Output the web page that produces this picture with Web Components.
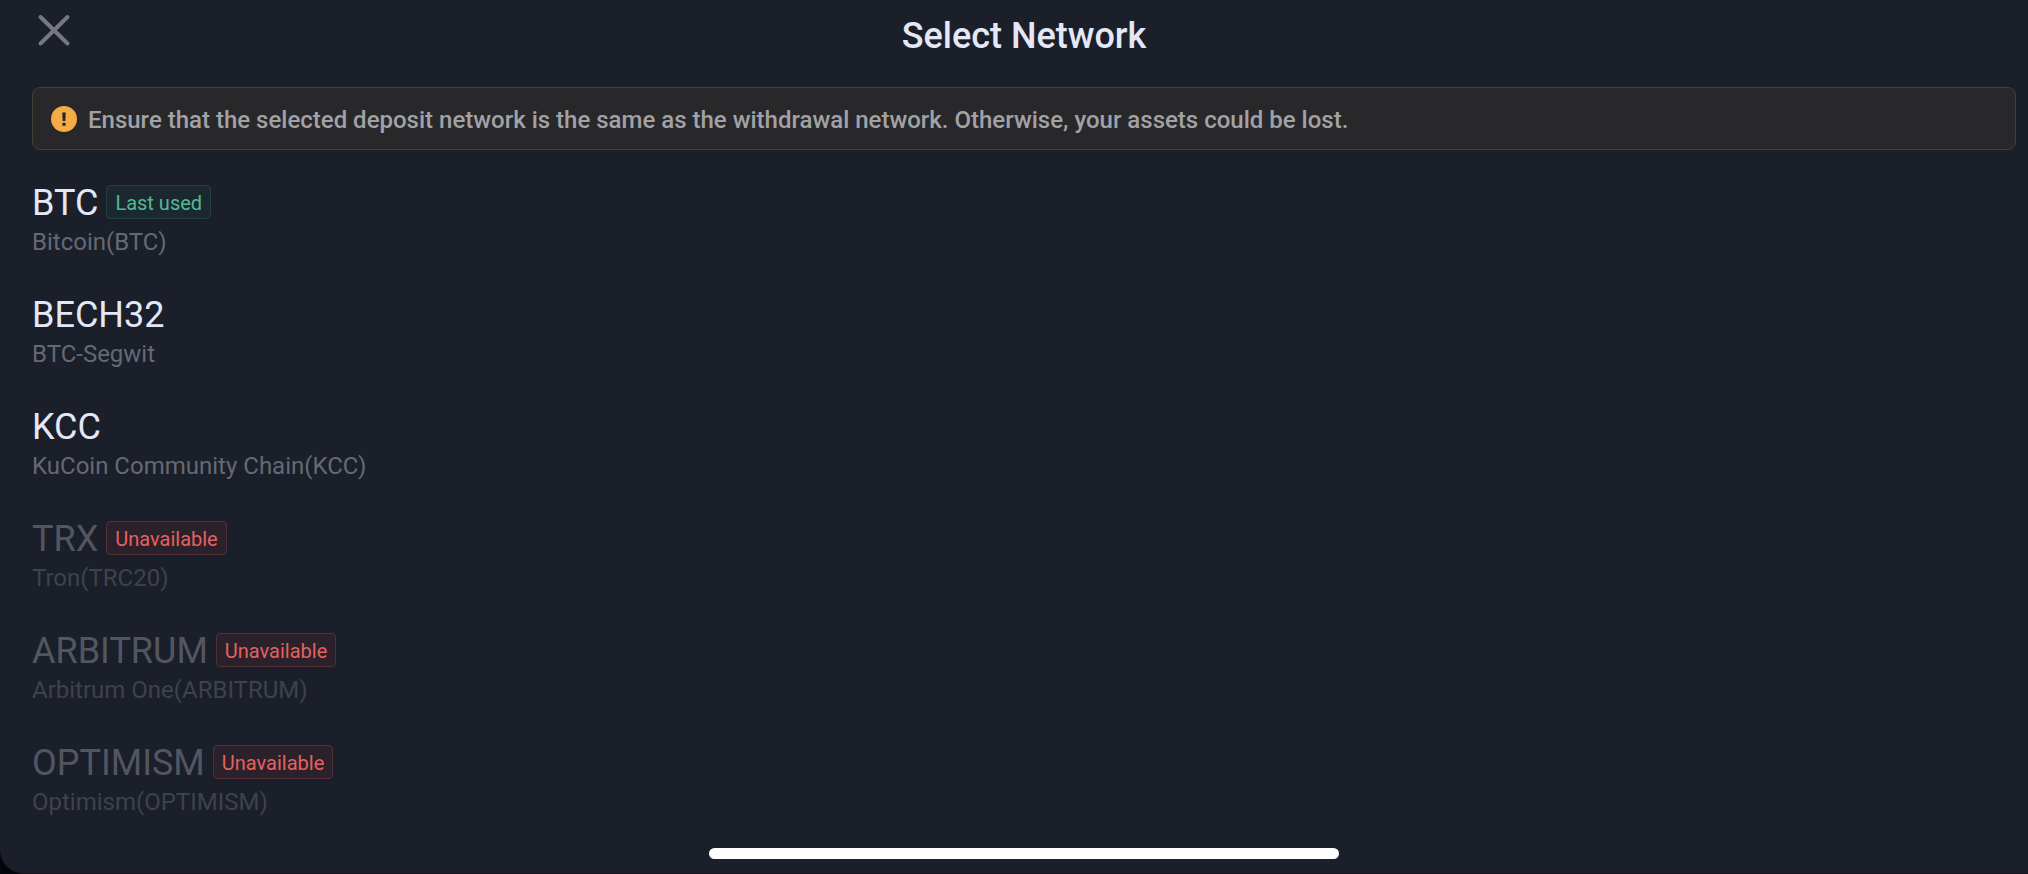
<!DOCTYPE html>
<html lang="en">
<head>
<meta charset="utf-8">
<meta name="viewport" content="width=device-width, initial-scale=1">
<title>Select Network</title>
<style>
html { background: #05060c; }
body { margin: 0; font-family: Roboto, "Liberation Sans", sans-serif; color: #e3e7f6; }
</style>
</head>
<body>
<network-sheet>
  <sheet-header slot="header">Select Network</sheet-header>
  <notice-banner slot="notice">Ensure that the selected deposit network is the same as the withdrawal network. Otherwise, your assets could be lost.</notice-banner>
  <network-item name="BTC">Bitcoin(BTC)<status-tag slot="tag" tone="success">Last used</status-tag></network-item>
  <network-item name="BECH32">BTC-Segwit</network-item>
  <network-item name="KCC">KuCoin Community Chain(KCC)</network-item>
  <network-item name="TRX" disabled>Tron(TRC20)<status-tag slot="tag" tone="danger">Unavailable</status-tag></network-item>
  <network-item name="ARBITRUM" disabled>Arbitrum One(ARBITRUM)<status-tag slot="tag" tone="danger">Unavailable</status-tag></network-item>
  <network-item name="OPTIMISM" disabled>Optimism(OPTIMISM)<status-tag slot="tag" tone="danger">Unavailable</status-tag></network-item>
</network-sheet>
<script>
const define = (name, html, setup) => {
  const template = document.createElement('template');
  template.innerHTML = html;
  customElements.define(name, class extends HTMLElement {
    constructor() {
      super();
      this.attachShadow({ mode: 'open' }).append(template.content.cloneNode(true));
    }
    connectedCallback() { if (setup) setup(this, this.shadowRoot); }
  });
};

define('network-sheet', `
<style>
:host { display: flex; flex-direction: column; box-sizing: border-box; min-height: 100vh; padding: 0 12px 14px 32px; background: #1b1f29; border-bottom: 1px solid #17151e; border-bottom-left-radius: 24px; }
main { display: flex; flex-direction: column; gap: 34px; padding: 28px 0 16px; }
.home { width: 630px; max-width: 60%; height: 11px; margin: auto auto 0; border-radius: 6px; background: #fff; }
</style>
<slot name="header"></slot>
<slot name="notice"></slot>
<main><slot></slot></main>
<div class="home"></div>`);

define('sheet-header', `
<style>
:host { display: grid; grid-template-columns: 1fr auto 1fr; height: 87px; }
button { justify-self: start; align-self: start; margin: 8px 0 0; padding: 0; border: 0; background: none; width: 44px; height: 44px; cursor: pointer; }
svg { display: block; }
h1 { margin: 15px 0 0; font-size: 36px; line-height: 42px; font-weight: 500; }
</style>
<button type="button" aria-label="Close"><svg width="44" height="44" viewBox="0 0 44 44"><path d="M8.5 9L35.5 35.5M35.5 9L8.5 35.5" fill="none" stroke="#757884" stroke-width="4" stroke-linecap="round"/></svg></button>
<h1><slot></slot></h1>`);

define('notice-banner', `
<style>
:host { display: flex; align-items: center; gap: 11px; box-sizing: border-box; min-height: 63px; padding: 8px 18px; border: 1px solid #443f37; border-radius: 8px; background: #28282a; color: #a2a2a6; font-size: 24px; line-height: 28px; font-weight: 500; }
svg { flex: none; }
p { margin: 0; padding-top: 2px; }
</style>
<svg width="26" height="26" viewBox="0 0 26 26"><circle cx="13" cy="13" r="13" fill="#f3ac46"/><path d="M11.2 6.5h3.6l-.5 8.5h-2.6z" fill="#28282a"/><rect x="11.4" y="16.8" width="3.2" height="3" fill="#28282a"/></svg>
<p><slot></slot></p>`);

define('network-item', `
<style>
:host { display: block; --name: #e3e7f6; --detail: #666974; }
:host([disabled]) { --name: #535660; --detail: #3f424c; }
button { display: block; width: 100%; padding: 0; border: 0; background: none; font: inherit; text-align: left; cursor: pointer; }
button:disabled { cursor: default; }
.title { display: flex; align-items: center; gap: 8px; height: 48px; }
.name { padding-top: 2px; font-size: 36px; line-height: 42px; color: var(--name); }
.detail { display: block; margin-top: 2px; font-size: 24px; line-height: 28px; color: var(--detail); }
</style>
<button type="button"><span class="title"><span class="name"></span><slot name="tag"></slot></span><span class="detail"><slot></slot></span></button>`,
(host, root) => {
  root.querySelector('.name').textContent = host.getAttribute('name');
  root.querySelector('button').disabled = host.hasAttribute('disabled');
});

define('status-tag', `
<style>
:host { display: block; box-sizing: border-box; padding: 4px 8px 2px; border: 1px solid; border-radius: 4px; font-size: 20px; line-height: 26px; }
:host([tone="success"]) { color: #53b894; background: #1b282f; border-color: #24403f; }
:host([tone="danger"]) { color: #e6605f; background: #2a212b; border-color: #50303a; }
</style>
<slot></slot>`);
</script>
</body>
</html>
